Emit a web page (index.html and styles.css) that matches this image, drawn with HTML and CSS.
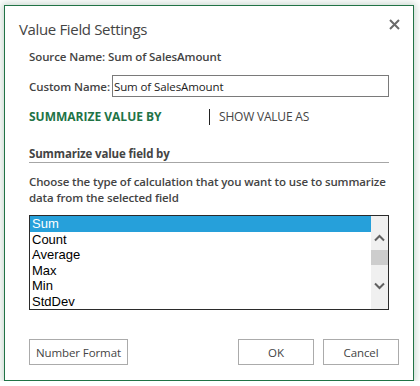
FILE: index.html
```html
<!DOCTYPE html>
<html lang="en">
  <head>
    <meta charset="UTF-8" />
    <title>Value Field Settings</title>
    <link rel="stylesheet" href="styles.css">
  </head>
  <body>
    <div class="dialog">
      <div class="title-bar">
        <h1>Value Field Settings</h1>
        <button class="close" title="Close">
          <svg width="11" height="11" viewBox="0 0 11 11">
            <path d="M1 1 L10 10 M10 1 L1 10" stroke="#6a6a6a" stroke-width="2" fill="none" />
          </svg>
        </button>
      </div>

      <div class="content">
        <p class="source">Source Name: Sum of SalesAmount</p>

        <div class="custom-row">
          <label for="custom-name">Custom Name:</label>
          <input id="custom-name" type="text" value="Sum of SalesAmount" />
        </div>

        <div class="tabs">
          <span class="tab active">SUMMARIZE VALUE BY</span>
          <span class="tab">SHOW VALUE AS</span>
        </div>

        <h2 class="section">Summarize value field by</h2>
        <p class="desc">
          Choose the type of calculation that you want to use to summarize
          data from the selected field
        </p>

        <div class="listbox">
          <ul class="items">
            <li class="selected">Sum</li>
            <li>Count</li>
            <li>Average</li>
            <li>Max</li>
            <li>Min</li>
            <li>StdDev</li>
          </ul>
          <div class="scrollbar">
            <svg class="arrow" width="11" height="8" viewBox="0 0 11 8">
              <path d="M1 6.5 L5.5 2 L10 6.5" stroke="#606060" stroke-width="2" fill="none" />
            </svg>
            <div class="thumb"></div>
            <svg class="arrow down" width="11" height="8" viewBox="0 0 11 8">
              <path d="M1 1.5 L5.5 6 L10 1.5" stroke="#606060" stroke-width="2" fill="none" />
            </svg>
          </div>
        </div>
      </div>

      <div class="buttons">
        <button class="btn">Number Format</button>
        <span class="spacer"></span>
        <button class="btn wide">OK</button>
        <button class="btn wide">Cancel</button>
      </div>
    </div>
  </body>
</html>
```

FILE: styles.css
```css
body {
  margin: 0;
  padding: 0;
  background: #ffffff;
  font-family: "Open Sans", "Noto Sans", sans-serif;
  color: #444444;
}
.dialog {
  box-sizing: border-box;
  width: 410px;
  height: 376px;
  margin: 5px 0 0 4px;
  border: 1px solid #217346;
  background: #ffffff;
  box-shadow: 0 0 7px 2px rgba(70, 120, 90, 0.28);
}
.title-bar {
  display: flex;
  justify-content: space-between;
  align-items: flex-start;
  padding: 12px 13px 0 14px;
}
h1 {
  margin: 0;
  font-size: 15px;
  font-weight: 400;
  letter-spacing: -0.35px;
  line-height: 22px;
  color: #444444;
}
.close {
  border: none;
  background: none;
  padding: 0;
  margin-top: 1px;
  width: 11px;
  height: 11px;
  cursor: pointer;
}
.close svg {
  display: block;
}
.content {
  padding: 0 24px;
}
.source {
  margin: 9px 0 0;
  font-size: 11.5px;
  font-weight: 600;
  letter-spacing: -0.1px;
  line-height: 16px;
}
.custom-row {
  display: flex;
  align-items: center;
  margin-top: 10px;
  height: 22px;
}
.custom-row label {
  font-size: 11.5px;
  font-weight: 600;
  letter-spacing: -0.1px;
  margin-right: 2px;
}
.custom-row input {
  flex: 1;
  box-sizing: border-box;
  height: 22px;
  margin: 0;
  padding: 0 1px;
  border: 1px solid #7a7a7a;
  font-family: "Open Sans", "Noto Sans", sans-serif;
  font-size: 11.5px;
  letter-spacing: -0.1px;
  color: #222222;
  outline: none;
}
.tabs {
  display: flex;
  margin-top: 11px;
  height: 18px;
  align-items: center;
}
.tab {
  font-size: 12px;
  line-height: 18px;
  color: #444444;
}
.tab.active {
  width: 180px;
  font-weight: 700;
  color: #217346;
}
.tab + .tab {
  border-left: 1px solid #222222;
  padding-left: 9px;
  line-height: 16px;
  letter-spacing: -0.2px;
}
.section {
  margin: 20px 0 0;
  font-size: 11.5px;
  font-weight: 700;
  letter-spacing: -0.15px;
  line-height: 16px;
  border-bottom: 1px solid #a6a6a6;
}
.desc {
  margin: 11px 0 0;
  font-size: 11.5px;
  font-weight: 600;
  letter-spacing: -0.12px;
  line-height: 16px;
}
.listbox {
  display: flex;
  box-sizing: border-box;
  height: 95px;
  margin-top: 9px;
  border: 1px solid #2b2b2b;
}
.items {
  flex: 1;
  list-style: none;
  margin: 0;
  padding: 0;
  font-family: "Liberation Sans", Arial, sans-serif;
  font-size: 13px;
  color: #000000;
}
.items li {
  line-height: 15.5px;
  padding-left: 2px;
}
.items li.selected {
  background: #26a0da;
  color: #ffffff;
}
.scrollbar {
  width: 17px;
  background: #f0f0f0;
  display: flex;
  flex-direction: column;
  align-items: center;
  padding-top: 18px;
}
.arrow {
  display: block;
}
.thumb {
  width: 17px;
  height: 15px;
  margin-top: 8px;
  background: #cdcdcd;
}
.arrow.down {
  margin-top: 17px;
}
.buttons {
  display: flex;
  gap: 9px;
  margin-top: 29px;
  padding: 0 14px 0 24px;
}
.spacer {
  flex: 1;
}
.btn {
  box-sizing: border-box;
  height: 26px;
  padding: 0 6px;
  border: 1px solid #ababab;
  background: #ffffff;
  font-family: "Open Sans", "Noto Sans", sans-serif;
  font-size: 11.5px;
  letter-spacing: -0.1px;
  color: #444444;
}
.btn.wide {
  width: 76px;
}
```
